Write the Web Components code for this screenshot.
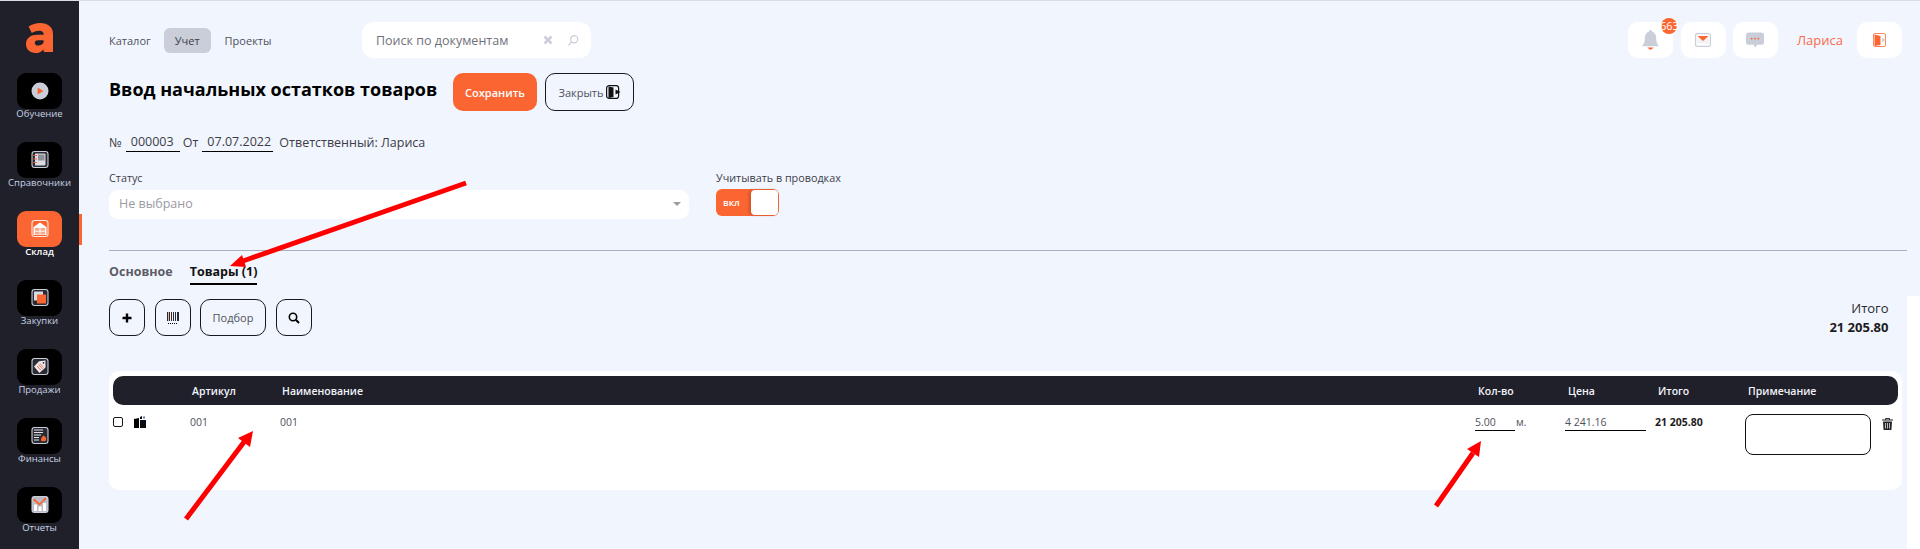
<!DOCTYPE html>
<html lang="ru">
<head>
<meta charset="utf-8">
<title>Ввод начальных остатков товаров</title>
<style>
  html, body { margin: 0; height: 549px; overflow: hidden; background: #f1f6fe; }
  body { font-family: "Open Sans", "Liberation Sans", sans-serif; color: #2b2b33; }
</style>
</head>
<body>
<app-shell></app-shell>

<script>
// every sidebar icon sits in the same 16x16 rounded frame
const frame = (stroke) => `<rect x="4" y="3.5" width="16" height="16" rx="2.5" fill="#2b2b33" stroke="${stroke}" stroke-width="1.1"/>`;

const ICONS = {
  learn: `<circle cx="12" cy="12" r="8.5" fill="#c9ced9"/><path d="M9.6 8.4l6 3.6-6 3.6z" fill="#fb6532"/>`,
  books: `${frame("#c9ced9")}<path d="M7 5.500h9.500a1 1 0 0 1 1 1v10a1 1 0 0 1-1 1H7z" fill="#d9dce4"/><path d="M10 6.500h6.500v6H10z" fill="#8d8f99"/><path d="M5.500 7.500H9M5.500 11H9M5.500 14.500H9" stroke="#fb6532" stroke-width="1.200"/>`,
  store: `<rect x="4" y="3.5" width="16" height="16" rx="2.5" fill="#fb6532" stroke="#ffe7dd" stroke-width="1.1"/><path d="M5.500 10L12 5.500 18.500 10v8h-13z" fill="#fff"/><path d="M7 11h10v6.500H7z" fill="#f5a98d"/><path d="M12 11v6.500M7 14.200h10" stroke="#fff" stroke-width=".9"/>`,
  buy: `${frame("#c9ced9")}<rect x="6" y="5.500" width="9" height="9" fill="#d9dce4"/><rect x="9" y="8.500" width="9" height="9" fill="#fb6532"/>`,
  sell: `${frame("#c9ced9")}<path d="M17.500 5.500l-6.500.7-5 5.300 5.500 6.500 6-5.500z" fill="#e9ebf0"/><path d="M9 11l4 4.500M10.500 9.500l4 4.500M12 8.500l3.500 4" stroke="#fb6532" stroke-width=".9"/><circle cx="15.500" cy="7.800" r=".9" fill="#2b2b33"/>`,
  money: `${frame("#c9ced9")}<path d="M6 6h9M6 8.500h9M6 11h7M6 13.500h5M6 16h5" stroke="#e4e6ec" stroke-width="1.200"/><path d="M15.500 11.500l2 1.500c.8 1 .8 2.500.4 3.200-.3.7-1 1-2 1h-1.500c-1 0-1.600-.8-1.400-2 .2-1.300 1.200-2.500 2.500-3.700z" fill="#fb6532"/>`,
  report: `<rect x="4" y="3.5" width="16" height="16" rx="2.5" fill="#b9bcc6" stroke="#c9ced9" stroke-width="1.100"/><rect x="6" y="11.500" width="3" height="6.500" fill="#fff"/><rect x="10.500" y="13.500" width="3" height="4.500" fill="#fff"/><rect x="15" y="10" width="3" height="8" fill="#fff"/><path d="M6.500 7l5 4.500 5.500-5.500" fill="none" stroke="#fb6532" stroke-width="1.700"/><circle cx="6.500" cy="7" r="1.200" fill="#fb6532"/><circle cx="17" cy="6" r="1.200" fill="#fb6532"/>`
};

class SideItem extends HTMLElement {
  connectedCallback() {
    let active = this.hasAttribute("active");
    let icon = ICONS[this.getAttribute("icon")];
    this.attachShadow({ mode: "open" });
    this.shadowRoot.innerHTML = `
      <style>
        :host {
          display: flex;
          flex-direction: column;
          align-items: center;
          height: 69px;
          position: relative;
          color: #c9d3e4;
          font-size: 9.5px;
          line-height: 14px;
        }
        .tile {
          width: 45px;
          height: 36px;
          border-radius: 9px;
          background: ${active ? "#fb6532" : "#000"};
          display: flex;
          align-items: center;
          justify-content: center;
        }
        svg { width: 24px; height: 24px; }
        .label { margin-top: -2px; ${active ? "color: #fff; font-weight: 600;" : ""} }
        .mark {
          position: absolute;
          right: -3px;
          top: 3px;
          width: 3px;
          height: 31px;
          background: #fb6532;
        }
      </style>
      <div class="tile"><svg viewBox="0 0 24 24">${icon}</svg></div>
      <div class="label"><slot></slot></div>
      ${active ? `<div class="mark"></div>` : ""}
    `;
  }
}
customElements.define("side-item", SideItem);

class SideBar extends HTMLElement {
  connectedCallback() {
    this.attachShadow({ mode: "open" });
    this.shadowRoot.innerHTML = `
      <style>
        :host {
          display: block;
          width: 79px;
          flex: none;
          background: #20202a;
          box-sizing: border-box;
          padding-top: 22px;
          font-family: "Open Sans", sans-serif;
        }
        .logo { display: block; margin: 0 auto 20px; width: 28px; height: 30px; }
      </style>
      <svg class="logo" viewBox="0 0 28 30">
        <path fill="#fb6532" fill-rule="evenodd" d="M14 0c8 0 13 4 13 11v18H18l-.6-2.600C15.500 28.800 12.600 30 9.500 30 4 30 0 26.500 0 21c0-6 4.800-9.300 11.500-9.300h6.300c0-2.600-1.600-4-4.600-4-2.300 0-5 .8-7.400 2.200L2.600 3.600C6 1.300 10 0 14 0zM11.800 17.300c-2 0-3 1-3 2.600 0 1.500 1.200 2.600 3 2.600 2.700 0 5.800-1.600 5.800-3.500v-1.700z"/>
      </svg>
      <slot></slot>
    `;
  }
}
customElements.define("side-bar", SideBar);

class IconButton extends HTMLElement {
  connectedCallback() {
    this.attachShadow({ mode: "open" });
    this.shadowRoot.innerHTML = `
      <style>
        :host {
          display: flex;
          align-items: center;
          justify-content: center;
          box-sizing: border-box;
          height: 37px;
          min-width: 36px;
          border: 1px solid #18181f;
          border-radius: 10px;
          font-size: 11px;
          color: #50505c;
          gap: 2px;
        }
      </style>
      <slot></slot>
    `;
  }
}
customElements.define("icon-button", IconButton);

class TopTile extends HTMLElement {
  connectedCallback() {
    this.attachShadow({ mode: "open" });
    this.shadowRoot.innerHTML = `
      <style>
        :host {
          display: flex;
          align-items: center;
          justify-content: center;
          width: 45px;
          height: 36px;
          background: #fff;
          border-radius: 10px;
          position: relative;
        }
        .badge {
          position: absolute;
          top: -4px;
          right: -4px;
          width: 16px;
          height: 16px;
          border-radius: 50%;
          background: #fb6532;
          color: #fff;
          font-size: 11px;
          line-height: 16px;
          white-space: nowrap;
          text-indent: -1px;
        }
      </style>
      <slot></slot>
      ${this.hasAttribute("badge") ? `<div class="badge">${this.getAttribute("badge")}</div>` : ""}
    `;
  }
}
customElements.define("top-tile", TopTile);

class TopBar extends HTMLElement {
  connectedCallback() {
    this.attachShadow({ mode: "open" });
    this.shadowRoot.innerHTML = `
      <style>
        :host {
          display: flex;
          align-items: center;
          height: 36px;
          color: #50505c;
          font-size: 11px;
        }
        .nav { display: flex; align-items: center; width: 253px; }
        .nav span { line-height: 25px; }
        .on { background: #c9ced9; border-radius: 6px; padding: 0 11px; margin: 0 14px 0 13px; color: #3c3c46; }
        .search {
          width: 229px;
          height: 36px;
          box-sizing: border-box;
          background: #fff;
          border-radius: 12px;
          display: flex;
          align-items: center;
          padding: 0 12px 0 14px;
          font-size: 12.5px;
          color: #70707a;
        }
        .search .txt { flex: 1; }
        .right { margin-left: auto; display: flex; align-items: center; gap: 7px; margin-right: 18px; }
        .bell { margin-right: 1px; }
        .user { color: #f96a4c; font-size: 13px; margin: 0 7px 0 12px; }
      </style>
      <div class="nav"><span>Каталог</span><span class="on">Учет</span><span>Проекты</span></div>
      <div class="search">
        <span class="txt">Поиск по документам</span>
        <svg width="10" height="10" viewBox="0 0 10 10" style="margin-right:14px"><path d="M1.500 1.500l7 7M8.500 1.500l-7 7" stroke="#c9ced9" stroke-width="2.600"/></svg>
        <svg width="12" height="13" viewBox="0 0 13 13"><circle cx="7.800" cy="5.200" r="3.900" fill="none" stroke="#c9ced9" stroke-width="1.300"/><path d="M5 8l-3.500 3.800" stroke="#c9ced9" stroke-width="1.500"/></svg>
      </div>
      <div class="right">
        <top-tile class="bell" badge="663">
          <svg width="17" height="22" viewBox="0 0 18 22"><path d="M9 0.500c1 0 1.500.7 1.500 1.500C13.500 3 15 5.500 15 9c0 3 .5 6 3 8.500H0c2.500-2.500 3-5.500 3-8.500 0-3.500 1.500-6 4.500-7C7.500 1.200 8 .5 9 .5z" fill="#c9ced9"/><path d="M5.500 19h7L9 21.500z" fill="#fb6532"/></svg>
        </top-tile>
        <top-tile>
          <svg width="16" height="14" viewBox="0 0 16 14"><rect x=".6" y=".6" width="14.800" height="12.800" rx="1.500" fill="#fff" stroke="#c9ced9" stroke-width="1.200"/><path d="M2.500 4l5.500 3 5.500-3v6.500h-11z" fill="#f1f2f6"/><path d="M2.500 3h11L8 8z" fill="#fb6532"/></svg>
        </top-tile>
        <top-tile>
          <svg width="18" height="16" viewBox="0 0 19 16"><path d="M3 0h13a3 3 0 0 1 3 3v7a3 3 0 0 1-3 3h-4l-2.500 3L8 13H3a3 3 0 0 1-3-3V3a3 3 0 0 1 3-3z" fill="#c9ced9"/><circle cx="6" cy="6.500" r="1" fill="#fb6532"/><circle cx="9.500" cy="6.500" r="1" fill="#fb6532"/><circle cx="13" cy="6.500" r="1" fill="#fb6532"/></svg>
        </top-tile>
        <span class="user">Лариса</span>
        <top-tile>
          <svg width="13" height="14" viewBox="0 0 13 14"><rect x=".5" y=".5" width="12" height="13" rx="1.500" fill="none" stroke="#fb8a62"/><path d="M1.500 1.500l6 1.500v9l-6 1z" fill="#fb6532"/><path d="M9 4.500l3 2.500-3 2.500z" fill="#c9ced9"/></svg>
        </top-tile>
      </div>
    `;
  }
}
customElements.define("top-bar", TopBar);

class GoodsTable extends HTMLElement {
  connectedCallback() {
    this.attachShadow({ mode: "open" });
    this.shadowRoot.innerHTML = `
      <style>
        :host {
          display: block;
          background: #fff;
          border-radius: 10px;
          padding: 5px 4px 0;
          height: 119px;
          box-sizing: border-box;
          font-size: 10.5px;
        }
        .row { display: grid; }
        .head {
          grid-template-columns: 79px 90px 1fr 90px 90px 90px 150px;
          height: 29px;
          align-items: center;
          background: #20202a;
          border-radius: 10px;
          color: #f2f4fa;
          font-weight: 600;
        }
        .body {
          grid-template-columns: 77px 90px 1fr 90px 90px 90px 153px;
          padding-top: 9px;
          color: #50505c;
          align-items: start;
        }
        .c0 { display: flex; align-items: center; gap: 11px; height: 16px; }
        .box { width: 8px; height: 8px; border: 1px solid #18181f; border-radius: 2px; }
        .ul { border-bottom: 1px solid #000; height: 16px; line-height: 16px; }
        .qty { display: flex; align-items: flex-start; gap: 1px; }
        .qty .ul { width: 40px; }
        .price .ul { width: 81px; }
        .sum { font-weight: 700; color: #1c1c22; line-height: 16px; }
        .note { display: flex; gap: 11px; }
        .area { width: 126px; height: 41px; box-sizing: border-box; border: 1px solid #111; border-radius: 8px; }
        .txt { line-height: 16px; }
      </style>
      <div class="row head">
        <div></div><div>Артикул</div><div>Наименование</div>
        <div>Кол-во</div><div>Цена</div><div>Итого</div><div>Примечание</div>
      </div>
      <div class="row body">
        <div class="c0">
          <div class="box"></div>
          <svg width="12" height="12" viewBox="0 0 12 12"><path d="M0 3l5-1v10H0z" fill="#000"/><path d="M6 1l2-1v3H6zM6 4h6v8H6z" fill="#0b0b12"/><path d="M9 .5h2v2H9z" fill="#5a7fb5"/></svg>
        </div>
        <div class="txt">001</div><div class="txt">001</div>
        <div class="qty"><div class="ul">5.00</div><div class="txt">м.</div></div>
        <div class="price"><div class="ul">4 241.16</div></div>
        <div class="sum">21 205.80</div>
        <div class="note">
          <div class="area"></div>
          <svg style="margin-top:4px" width="11" height="12" viewBox="0 0 11 12"><path d="M0 2h11M3.500 2V.6h4V2" fill="none" stroke="#222" stroke-width="1"/><path d="M1 3.500h9l-.6 8.500H1.600z" fill="#222"/><path d="M3.500 5v5.500M5.500 5v5.500M7.500 5v5.500" stroke="#fff" stroke-width=".7"/></svg>
        </div>
      </div>
    `;
  }
}
customElements.define("goods-table", GoodsTable);

class DocForm extends HTMLElement {
  connectedCallback() {
    this.attachShadow({ mode: "open" });
    this.shadowRoot.innerHTML = `
      <style>
        :host {
          display: flex;
          flex-direction: column;
          flex: 1;
          min-width: 0;
          box-sizing: border-box;
          padding: 21px 0 0 30px;
          font-family: "Open Sans", sans-serif;
        }
        .title-row { display: flex; align-items: center; margin-top: 15px; height: 38px; }
        h1 { margin: 0 0 7px; font-size: 18px; font-weight: 700; color: #000; width: 344px; white-space: nowrap; }
        .save {
          width: 84px; height: 38px; border-radius: 10px; background: #fb6532; color: #fff;
          font-size: 11px; font-weight: 600; display: flex; align-items: center; justify-content: center;
        }
        .close { margin-left: 8px; width: 89px; height: 38px; }
        .meta { display: flex; align-items: center; margin-top: 21px; font-size: 12.5px; color: #3c3c46; height: 20px; }
        .meta .ul {
          border-bottom: 1px solid #000; line-height: 19px; margin: 0 3px 0 4px; padding-left: 5px;
          box-sizing: border-box;
        }
        .meta .no { width: 54px; }
        .meta .date { width: 71px; margin-right: 6px; }
        .fields { display: flex; margin-top: 18px; }
        .status { width: 580px; }
        .lbl { font-size: 10.8px; color: #3c3c46; line-height: 15px; }
        .select {
          margin-top: 5px; height: 29px; background: #fff; border-radius: 9px; box-sizing: border-box;
          display: flex; align-items: center; justify-content: space-between; padding: 0 8px 2px 10px;
          font-size: 12.5px; color: #9a9aa3;
        }
        .tri { border: 4px solid transparent; border-top-color: #9a9aa3; border-bottom: 0; }
        .post { margin-left: 27px; }
        .switch {
          margin-top: 4px; width: 63px; height: 27px; border-radius: 6px; background: #fb6532; position: relative;
          color: #fff; font-size: 9.5px; font-weight: 600; line-height: 27px; padding-left: 7px; box-sizing: border-box;
        }
        .knob {
          position: absolute; right: 1px; top: 1px; width: 27px; height: 25px; background: #fff; border-radius: 4px;
          box-shadow: -2px 0 3px rgba(120,50,20,.35);
        }
        hr { border: 0; border-top: 1px solid #a9adc2; margin: 31px 13px 0 0; }
        .tabs { display: flex; gap: 17px; margin-top: 12px; font-size: 12.5px; font-weight: 700; }
        .tabs div { height: 22px; line-height: 18px; color: #5c5c66; }
        .tabs .cur { color: #111; border-bottom: 2px solid #000; box-sizing: border-box; }
        .tools { display: flex; align-items: center; gap: 10px; margin: 14px 31.5px 0 0; height: 37px; }
        .pick { width: 66px; margin-left: -1px; }
        .total { margin-left: auto; text-align: right; font-size: 13px; line-height: 19px; margin-top: 1px; }
        .total b { display: block; color: #1c1c22; font-weight: 700; }
        goods-table { margin-top: 35px; width: 1793px; }
      </style>
      <top-bar></top-bar>
      <div class="title-row">
        <h1>Ввод начальных остатков товаров</h1>
        <div class="save">Сохранить</div>
        <icon-button class="close">Закрыть
          <svg width="15" height="14" viewBox="0 0 15 14"><rect x=".6" y=".6" width="12" height="12.800" rx="2.500" fill="none" stroke="#111" stroke-width="1.200"/><path d="M2.500 1.500l5 1v9.500l-5 1z" fill="#111"/><path d="M9.500 4.500l5 2.500-5 2.500z" fill="#111"/></svg>
        </icon-button>
      </div>
      <div class="meta">№<span class="ul no">000003</span>От<span class="ul date">07.07.2022</span>Ответственный: Лариса</div>
      <div class="fields">
        <div class="status">
          <div class="lbl">Статус</div>
          <div class="select">Не выбрано<span class="tri"></span></div>
        </div>
        <div class="post">
          <div class="lbl">Учитывать в проводках</div>
          <div class="switch">вкл<div class="knob"></div></div>
        </div>
      </div>
      <hr>
      <div class="tabs"><div>Основное</div><div class="cur">Товары (1)</div></div>
      <div class="tools">
        <icon-button>
          <svg width="12" height="12" viewBox="0 0 12 12"><path d="M6 1.500v9M1.500 6h9" stroke="#000" stroke-width="2.400"/></svg>
        </icon-button>
        <icon-button>
          <svg width="12" height="12" viewBox="0 0 12 12" shape-rendering="crispEdges"><path d="M0 0h1v9H0zM2 0h1v9H2zM4 0h1v9H4zM6 0h1v9H6zM8 0h1v9H8zM10 0h1.500v9H10z" fill="#2a2a33"/><path d="M1 0h1v9H1z" fill="#e9b48f"/><path d="M1 11h1v1H1zM3 11h1v1H3zM5 11h1v1H5zM7 11h1v1H7zM9 11h1v1H9z" fill="#000"/></svg>
        </icon-button>
        <icon-button class="pick">Подбор</icon-button>
        <icon-button>
          <svg width="12" height="12" viewBox="0 0 12 12"><circle cx="5" cy="5" r="3.700" fill="none" stroke="#000" stroke-width="1.600"/><path d="M7.800 7.800L11 11" stroke="#000" stroke-width="2"/></svg>
        </icon-button>
        <div class="total">Итого<b>21 205.80</b></div>
      </div>
      <goods-table></goods-table>
    `;
  }
}
customElements.define("doc-form", DocForm);

class AppShell extends HTMLElement {
  connectedCallback() {
    this.attachShadow({ mode: "open" });
    this.shadowRoot.innerHTML = `
      <style>
        :host {
          display: flex;
          height: 549px;
          box-sizing: border-box;
          border-top: 1px solid #d9dde6;
          position: relative;
          overflow: hidden;
        }
        .edge { position: absolute; right: 0; top: 295px; bottom: 0; width: 13px; background: #fff; }
        .arrows { position: absolute; left: 0; top: -1px; width: 1920px; height: 549px; pointer-events: none; }
      </style>
      <side-bar>
        <side-item icon="learn">Обучение</side-item>
        <side-item icon="books">Справочники</side-item>
        <side-item icon="store" active>Склад</side-item>
        <side-item icon="buy">Закупки</side-item>
        <side-item icon="sell">Продажи</side-item>
        <side-item icon="money">Финансы</side-item>
        <side-item icon="report">Отчеты</side-item>
      </side-bar>
      <doc-form></doc-form>
      <div class="edge"></div>
      <svg class="arrows" viewBox="0 0 1920 549">
        <g stroke="#fe0000" stroke-width="5" fill="#fe0000">
          <path d="M466 183L243 261"/><path d="M230 266l12-11 4 12z" stroke="none"/>
          <path d="M186 519L244 442"/><path d="M253 431l-15 7 12 9z" stroke="none"/>
          <path d="M1436 506L1473 453"/><path d="M1481 441l-14 8 12 8z" stroke="none"/>
        </g>
      </svg>
    `;
  }
}
customElements.define("app-shell", AppShell);
</script>
</body>
</html>
